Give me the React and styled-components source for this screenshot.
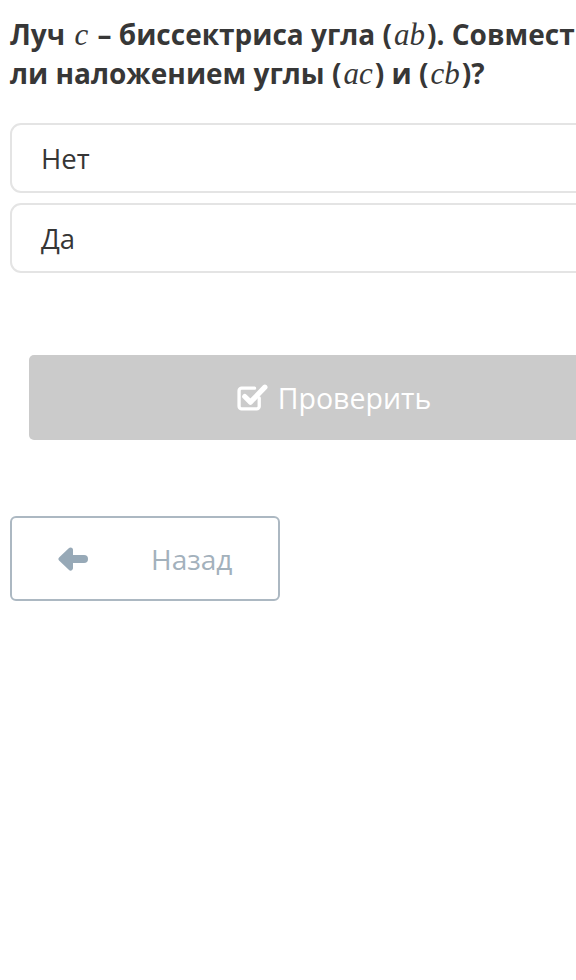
import React from 'react'
import styled, { createGlobalStyle } from 'styled-components'

const GlobalStyle = createGlobalStyle`
  body {
    margin: 0;
    background: #fff;
    overflow: hidden;
    font-family: 'Open Sans', 'Noto Sans', sans-serif;
  }
`

const OPTIONS = ['Нет', 'Да']

const CheckIcon = () => (
  <svg width='31' height='29' viewBox='0 0 30 28' fill='none'>
    <path
      d='M21.5 14.5 V22.5 a2.5 2.5 0 0 1 -2.5 2.5 H4.5 A2.5 2.5 0 0 1 2 22.5 V7.5 A2.5 2.5 0 0 1 4.5 5 H17'
      stroke='#fff'
      strokeWidth='3.2'
      strokeLinecap='round'
    />
    <path
      d='M7.5 13 L13 18.5 L27 4'
      stroke='#fff'
      strokeWidth='5'
      strokeLinecap='round'
      strokeLinejoin='round'
    />
  </svg>
)

const ArrowIcon = () => (
  <svg width='30' height='24' viewBox='0 0 30 24'>
    <path d='M12.5 3 L3 12 L12.5 21 Z' fill='#97a9b7' stroke='#97a9b7' strokeWidth='5' strokeLinejoin='round' />
    <path d='M10 12 H26' stroke='#97a9b7' strokeWidth='8' strokeLinecap='round' />
  </svg>
)

const App = () => {
  return (
    <Page>
      <GlobalStyle />
      <Question>
        Луч <M>c</M> – биссектриса угла (<M>ab</M>). Совместимы ли наложением углы (<M>ac</M>) и (<M>cb</M>)?
      </Question>

      <Options>
        {OPTIONS.map(option => (
          <Option key={option}>{option}</Option>
        ))}
      </Options>

      <CheckButton>
        <CheckIcon />
        Проверить
      </CheckButton>

      <BackButton>
        <ArrowIcon />
        Назад
      </BackButton>
    </Page>
  )
}

const Page = styled.div`
  width: 660px;
  padding: 15px 10px 0;
  box-sizing: border-box;
`

const Question = styled.div`
  width: 640px;
  font-size: 28px;
  line-height: 38px;
  font-weight: 700;
  color: #373737;
`

const M = styled.span`
  font-family: 'Liberation Serif', 'DejaVu Serif', serif;
  font-style: italic;
  font-weight: 400;
  font-size: 31px;
  margin: 0 2px;
`

const Options = styled.div`
  display: flex;
  flex-direction: column;
  gap: 10px;
  margin-top: 30px;
`

const Option = styled.div`
  height: 70px;
  box-sizing: border-box;
  border: 2px solid #e4e4e4;
  border-radius: 11px;
  display: flex;
  align-items: center;
  padding-left: 29px;
  font-size: 27.5px;
  color: #363636;
`

const CheckButton = styled.div`
  margin: 82px 0 0 19px;
  width: 610px;
  height: 85px;
  border-radius: 5px;
  background: #cbcbcb;
  color: #fff;
  display: flex;
  align-items: center;
  justify-content: center;
  gap: 10px;
  font-size: 28.5px;
`

const BackButton = styled.div`
  margin-top: 76px;
  width: 270px;
  height: 85px;
  box-sizing: border-box;
  border: 2px solid #acb8c2;
  border-radius: 6px;
  display: flex;
  align-items: center;
  gap: 63px;
  padding-left: 46px;
  color: #a3b1bc;
  font-size: 28px;
`

export default App
